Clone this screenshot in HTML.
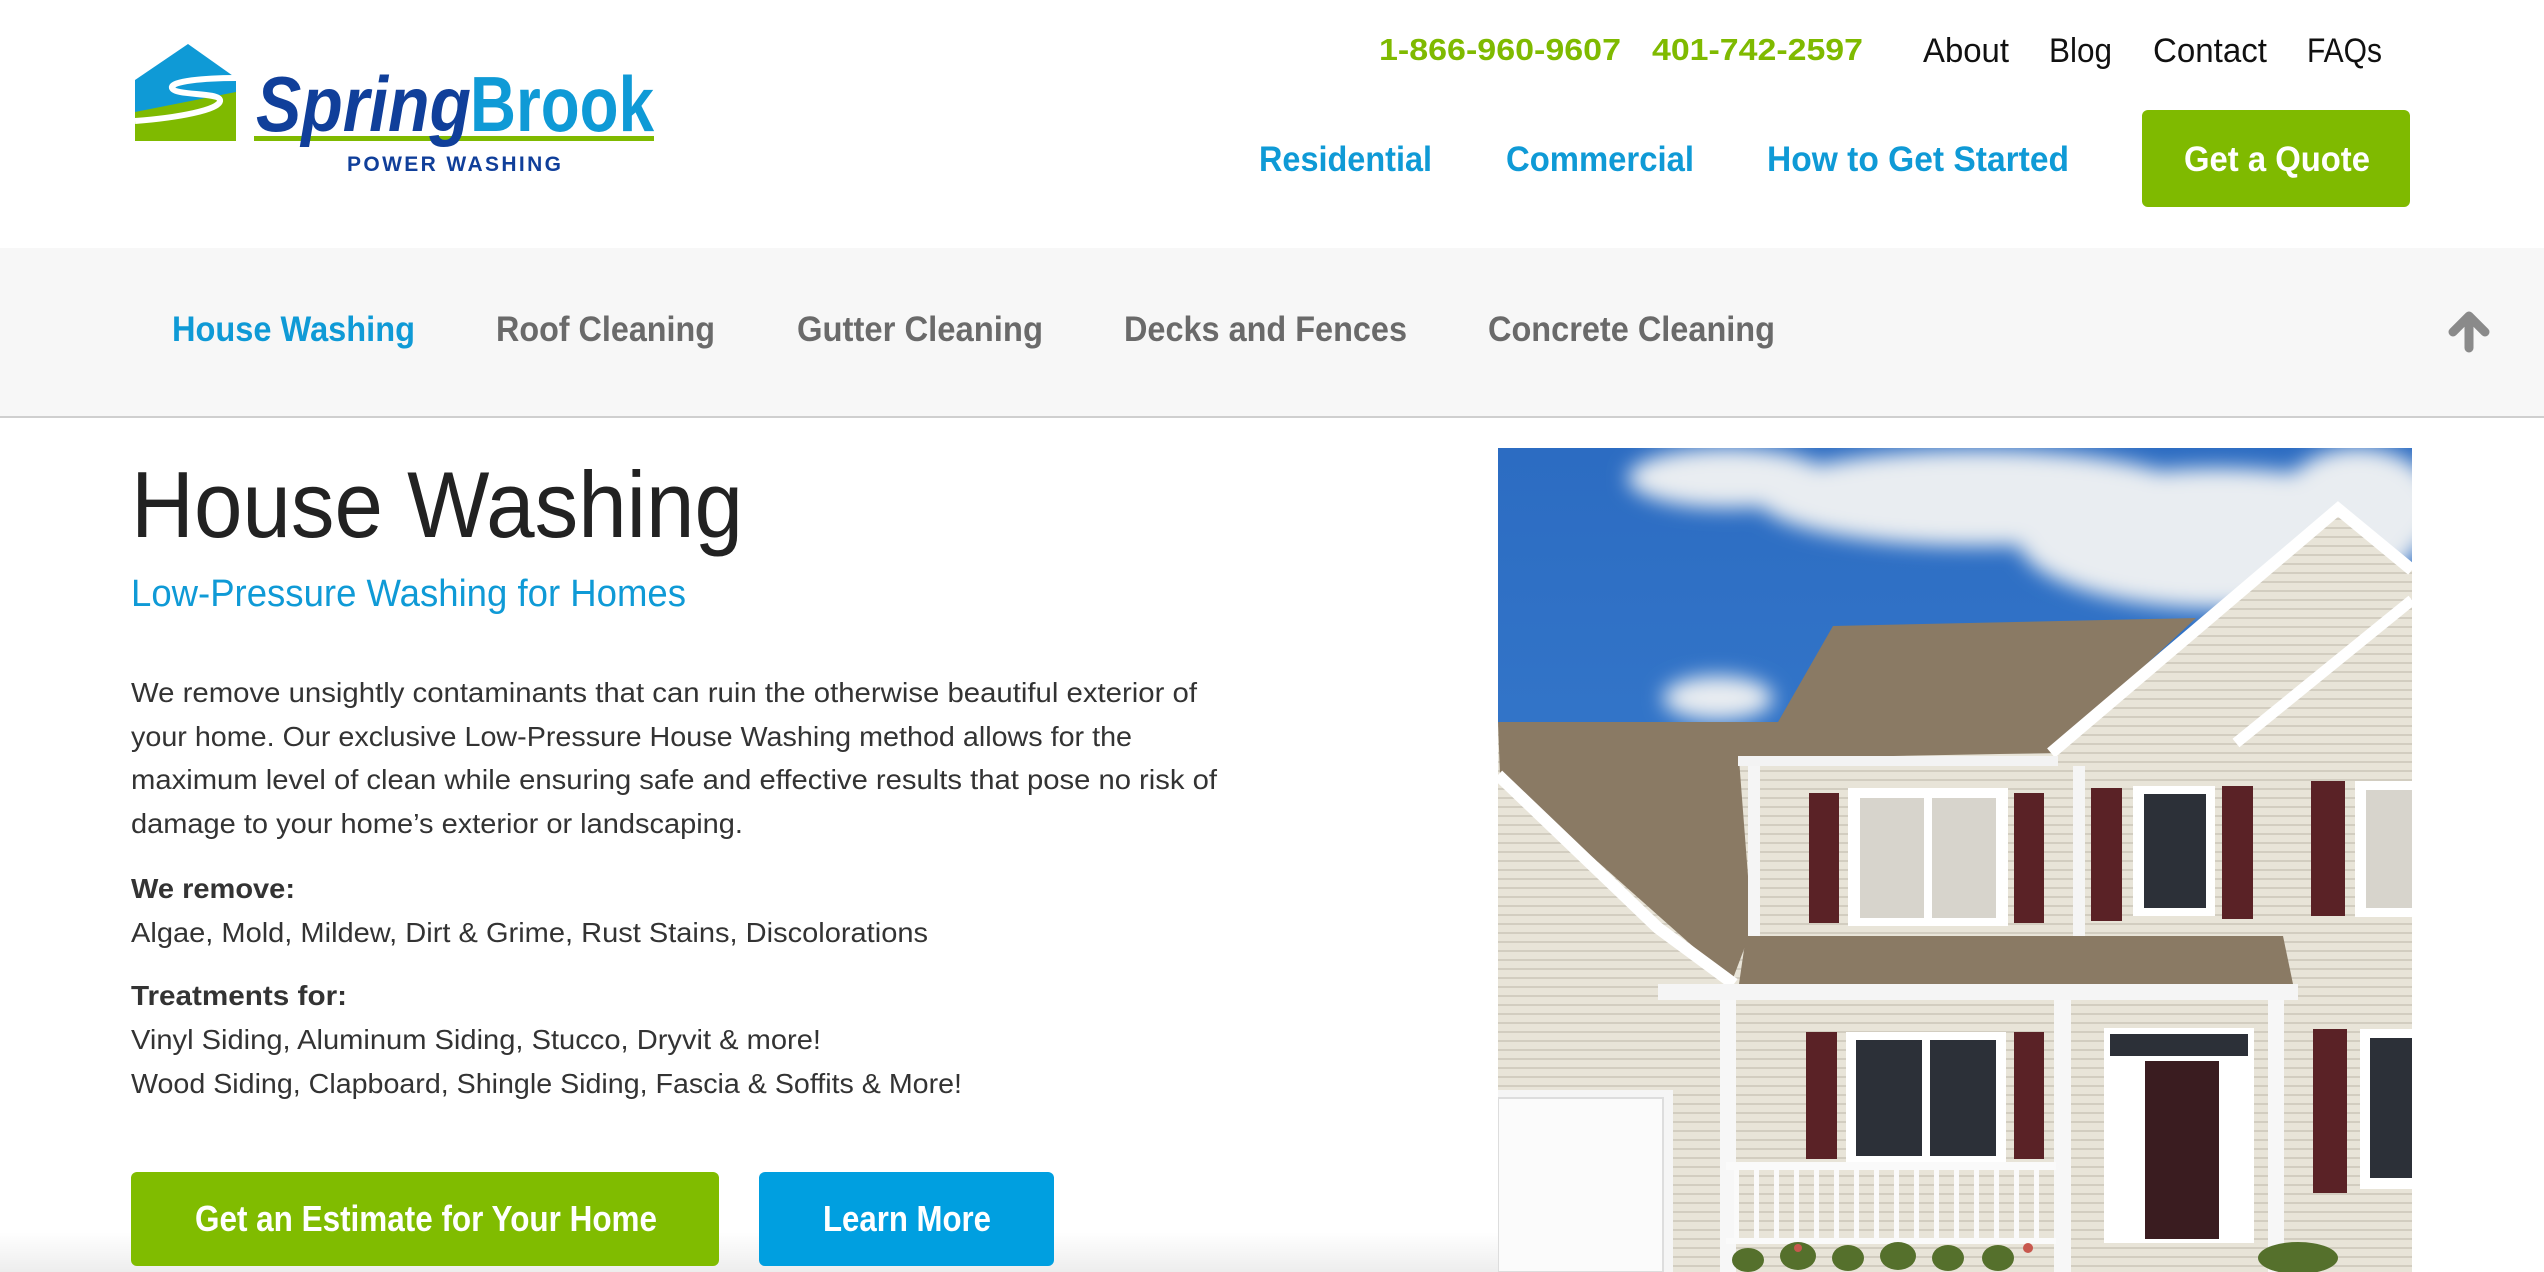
<!DOCTYPE html>
<html><head><meta charset="utf-8">
<style>
*{margin:0;padding:0;box-sizing:border-box}
html,body{width:2544px;height:1272px;overflow:hidden;background:#fff;font-family:"Liberation Sans",sans-serif;position:relative}
.a{position:absolute;white-space:nowrap;line-height:1}
.fit{display:inline-block;transform-origin:0 50%}
.n{font-family:"Liberation Sans Narrow","Liberation Sans",sans-serif}
.blue{color:#0f9ad6}
.grn{color:#7fba00}
</style></head><body>
<div class="a" style="left:0;top:1232px;width:1498px;height:40px;background:linear-gradient(rgba(0,0,0,0),rgba(0,0,0,0.07))"></div>
<!-- logo -->
<svg class="a" style="left:130px;top:40px" width="540" height="150" viewBox="130 40 540 150">
 <polygon points="135,80 188,44 236,78 236,141 135,141" fill="#0f9ad6"/>
 <polygon points="135,112 236,92 236,141 135,141" fill="#7fba00"/>
 <path d="M135,121 C175,118 222,110 220,100 C218,92 175,96 172,88 C170,81 205,78 236,78" stroke="#fff" stroke-width="6" fill="none"/>
 <rect x="254" y="136" width="400" height="5" fill="#7fba00"/>
 <text x="256" y="131" font-family="Liberation Sans" font-weight="bold" font-style="italic" font-size="78" fill="#103f9a" textLength="215" lengthAdjust="spacingAndGlyphs">Spring</text>
 <text x="470" y="131" font-family="Liberation Sans" font-weight="bold" font-size="78" fill="#0f9ad6" textLength="184" lengthAdjust="spacingAndGlyphs">Brook</text>
 <text x="347" y="171" font-family="Liberation Sans" font-weight="bold" font-size="21" fill="#103f9a" textLength="214" lengthAdjust="spacing">POWER WASHING</text>
</svg>
<!-- top links -->
<div class="a n grn" style="left:1379px;top:34px;font-size:31px;font-weight:bold"><span class="fit" style="--w:242">1-866-960-9607</span></div>
<div class="a n grn" style="left:1652px;top:34px;font-size:31px;font-weight:bold"><span class="fit" style="--w:211">401-742-2597</span></div>
<div class="a n" style="left:1923px;top:34px;font-size:34px;color:#111"><span class="fit" style="--w:86">About</span></div>
<div class="a n" style="left:2049px;top:34px;font-size:34px;color:#111"><span class="fit" style="--w:63">Blog</span></div>
<div class="a n" style="left:2153px;top:34px;font-size:34px;color:#111"><span class="fit" style="--w:114">Contact</span></div>
<div class="a n" style="left:2307px;top:34px;font-size:34px;color:#111"><span class="fit" style="--w:75">FAQs</span></div>
<div class="a n blue" style="left:1259px;top:142px;font-size:35px;font-weight:bold"><span class="fit" style="--w:173">Residential</span></div>
<div class="a n blue" style="left:1506px;top:142px;font-size:35px;font-weight:bold"><span class="fit" style="--w:188">Commercial</span></div>
<div class="a n blue" style="left:1767px;top:142px;font-size:35px;font-weight:bold"><span class="fit" style="--w:302">How to Get Started</span></div>
<div class="a" style="left:2142px;top:110px;width:268px;height:97px;background:#7fba00;border-radius:6px"></div>
<div class="a n" style="left:2184px;top:142px;font-size:35px;font-weight:bold;color:#fff"><span class="fit" style="--w:186">Get a Quote</span></div>
<!-- subnav -->
<div class="a" style="left:0;top:248px;width:2544px;height:170px;background:#f7f7f7;border-bottom:2px solid #cfcfcf"></div>
<div class="a n blue" style="left:172px;top:312px;font-size:35px;font-weight:bold"><span class="fit" style="--w:243">House Washing</span></div>
<div class="a n" style="left:496px;top:312px;font-size:35px;font-weight:bold;color:#6a6a6a"><span class="fit" style="--w:219">Roof Cleaning</span></div>
<div class="a n" style="left:797px;top:312px;font-size:35px;font-weight:bold;color:#6a6a6a"><span class="fit" style="--w:246">Gutter Cleaning</span></div>
<div class="a n" style="left:1124px;top:312px;font-size:35px;font-weight:bold;color:#6a6a6a"><span class="fit" style="--w:283">Decks and Fences</span></div>
<div class="a n" style="left:1488px;top:312px;font-size:35px;font-weight:bold;color:#6a6a6a"><span class="fit" style="--w:287">Concrete Cleaning</span></div>
<svg class="a" style="left:2440px;top:300px" width="60" height="60" viewBox="2440 300 60 60"><path d="M2469,348 V316 M2453,332 L2469,316 L2485,332" stroke="#8a8a8a" stroke-width="9" stroke-linecap="round" stroke-linejoin="round" fill="none"/></svg>
<!-- content -->
<div class="a" style="left:131px;top:458px;font-size:94px;color:#222"><span class="fit" style="--w:612">House Washing</span></div>
<div class="a blue" style="left:131px;top:575px;font-size:38px"><span class="fit" style="--w:555">Low-Pressure Washing for Homes</span></div>
<div class="a" style="left:131px;top:679px;font-size:28px;color:#333"><span class="fit" style="--w:1066">We remove unsightly contaminants that can ruin the otherwise beautiful exterior of</span></div>
<div class="a" style="left:131px;top:723px;font-size:28px;color:#333"><span class="fit" style="--w:1001">your home. Our exclusive Low-Pressure House Washing method allows for the</span></div>
<div class="a" style="left:131px;top:766px;font-size:28px;color:#333"><span class="fit" style="--w:1086">maximum level of clean while ensuring safe and effective results that pose no risk of</span></div>
<div class="a" style="left:131px;top:810px;font-size:28px;color:#333"><span class="fit" style="--w:612">damage to your home’s exterior or landscaping.</span></div>
<div class="a" style="left:131px;top:875px;font-size:28px;color:#333;font-weight:bold"><span class="fit" style="--w:164">We remove:</span></div>
<div class="a" style="left:131px;top:919px;font-size:28px;color:#333"><span class="fit" style="--w:797">Algae, Mold, Mildew, Dirt &amp; Grime, Rust Stains, Discolorations</span></div>
<div class="a" style="left:131px;top:982px;font-size:28px;color:#333;font-weight:bold"><span class="fit" style="--w:216">Treatments for:</span></div>
<div class="a" style="left:131px;top:1026px;font-size:28px;color:#333"><span class="fit" style="--w:690">Vinyl Siding, Aluminum Siding, Stucco, Dryvit &amp; more!</span></div>
<div class="a" style="left:131px;top:1070px;font-size:28px;color:#333"><span class="fit" style="--w:831">Wood Siding, Clapboard, Shingle Siding, Fascia &amp; Soffits &amp; More!</span></div>
<div class="a" style="left:131px;top:1172px;width:588px;height:94px;background:#80bc00;border-radius:6px"></div>
<div class="a" style="left:759px;top:1172px;width:295px;height:94px;background:#009fe0;border-radius:6px"></div>
<div class="a n" style="left:195px;top:1201px;font-size:36px;font-weight:bold;color:#fff"><span class="fit" style="--w:462">Get an Estimate for Your Home</span></div>
<div class="a n" style="left:823px;top:1201px;font-size:36px;font-weight:bold;color:#fff"><span class="fit" style="--w:168">Learn More</span></div>
<!-- house image -->
<svg class="a" style="left:1498px;top:448px" width="914" height="824" viewBox="0 0 914 824">
 <defs><linearGradient id="sky" x1="0" y1="0" x2="0" y2="1"><stop offset="0" stop-color="#2c6cc2"/><stop offset="1" stop-color="#3f85d4"/></linearGradient>
 <pattern id="sid" width="10" height="9" patternUnits="userSpaceOnUse"><rect width="10" height="9" fill="#e8e4d8"/><rect y="7" width="10" height="2" fill="#d2cdc0"/></pattern>
 <filter id="bl"><feGaussianBlur stdDeviation="10"/></filter></defs>
 <rect width="914" height="824" fill="url(#sky)"/>
 <g fill="#e9edf1" filter="url(#bl)">
  <ellipse cx="230" cy="30" rx="100" ry="30"/>
  <ellipse cx="480" cy="50" rx="220" ry="48"/>
  <ellipse cx="720" cy="90" rx="200" ry="70"/>
  <ellipse cx="860" cy="60" rx="80" ry="60"/>
  <ellipse cx="220" cy="250" rx="55" ry="22"/>
 </g>
 <polygon points="0,274 914,274 914,824 0,824" fill="url(#sid)"/>
 <polygon points="553,305 840,61 914,122 914,300" fill="url(#sid)"/>
 <polygon points="0,274 280,274 335,178 698,170 553,305 241,311 254,480 234,533 2,327" fill="#8a7a64"/>
 <polygon points="248,488 785,488 795,536 241,536" fill="#8a7a64"/>
 <polyline points="0,327 160,480 236,536" stroke="#fff" stroke-width="12" fill="none"/>
 <polyline points="553,305 840,61 914,122" stroke="#fff" stroke-width="12" fill="none"/>
 <polyline points="738,295 914,152" stroke="#fff" stroke-width="11" fill="none"/>
 <rect x="240" y="308" width="320" height="10" fill="#f3f3f3"/>
 <rect x="160" y="536" width="640" height="16" fill="#f5f5f5"/>
 <rect x="250" y="318" width="12" height="170" fill="#f5f5f5"/>
 <rect x="575" y="318" width="12" height="170" fill="#f5f5f5"/>
 <g fill="#5a2226"><rect x="311" y="345" width="30" height="130"/><rect x="516" y="345" width="30" height="130"/><rect x="593" y="340" width="31" height="133"/><rect x="724" y="338" width="31" height="133"/><rect x="813" y="333" width="34" height="135"/>
 <rect x="308" y="584" width="31" height="127"/><rect x="516" y="584" width="30" height="127"/><rect x="815" y="581" width="34" height="164"/></g>
 <g fill="#fff"><rect x="350" y="340" width="160" height="138"/><rect x="635" y="338" width="82" height="130"/><rect x="857" y="333" width="57" height="136"/><rect x="348" y="584" width="160" height="130"/><rect x="862" y="581" width="52" height="160"/><rect x="606" y="580" width="150" height="215"/></g>
 <g fill="#d7d4cc"><rect x="362" y="350" width="64" height="120"/><rect x="434" y="350" width="64" height="120"/><rect x="868" y="342" width="46" height="118"/></g>
 <g fill="#2c3038"><rect x="646" y="346" width="62" height="114"/><rect x="358" y="592" width="66" height="116"/><rect x="432" y="592" width="66" height="116"/><rect x="612" y="586" width="138" height="22"/><rect x="872" y="590" width="42" height="140"/></g>
 <rect x="647" y="613" width="74" height="178" fill="#3a1c20"/>
 <rect x="222" y="552" width="16" height="272" fill="#f7f7f7"/>
 <rect x="556" y="552" width="17" height="272" fill="#f7f7f7"/>
 <rect x="770" y="552" width="16" height="272" fill="#f7f7f7"/>
 <rect x="0" y="642" width="175" height="182" fill="#f5f5f5"/>
 <rect x="0" y="650" width="165" height="174" fill="#fbfbfb" stroke="#ddd" stroke-width="2"/>
 <rect x="228" y="714" width="330" height="8" fill="#fafafa"/>
 <g fill="#fafafa"><rect x="236" y="722" width="5" height="72"/><rect x="256" y="722" width="5" height="72"/><rect x="276" y="722" width="5" height="72"/><rect x="296" y="722" width="5" height="72"/><rect x="316" y="722" width="5" height="72"/><rect x="336" y="722" width="5" height="72"/><rect x="356" y="722" width="5" height="72"/><rect x="376" y="722" width="5" height="72"/><rect x="396" y="722" width="5" height="72"/><rect x="416" y="722" width="5" height="72"/><rect x="436" y="722" width="5" height="72"/><rect x="456" y="722" width="5" height="72"/><rect x="476" y="722" width="5" height="72"/><rect x="496" y="722" width="5" height="72"/><rect x="516" y="722" width="5" height="72"/><rect x="536" y="722" width="5" height="72"/></g>
 <rect x="228" y="790" width="330" height="6" fill="#fafafa"/>
 <g fill="#55702c"><ellipse cx="250" cy="812" rx="16" ry="12"/><ellipse cx="300" cy="808" rx="18" ry="14"/><ellipse cx="350" cy="810" rx="16" ry="13"/><ellipse cx="400" cy="808" rx="18" ry="14"/><ellipse cx="450" cy="810" rx="16" ry="13"/><ellipse cx="500" cy="810" rx="16" ry="13"/><ellipse cx="800" cy="810" rx="40" ry="16"/></g>
 <g fill="#c8584e"><circle cx="530" cy="800" r="5"/><circle cx="300" cy="800" r="4"/></g>
</svg>
<script>
document.querySelectorAll('.fit').forEach(function(e){var w=parseFloat(getComputedStyle(e).getPropertyValue('--w'));var c=e.getBoundingClientRect().width;if(w&&c)e.style.transform='scaleX('+(w/c)+')';});
</script>
</body></html>
